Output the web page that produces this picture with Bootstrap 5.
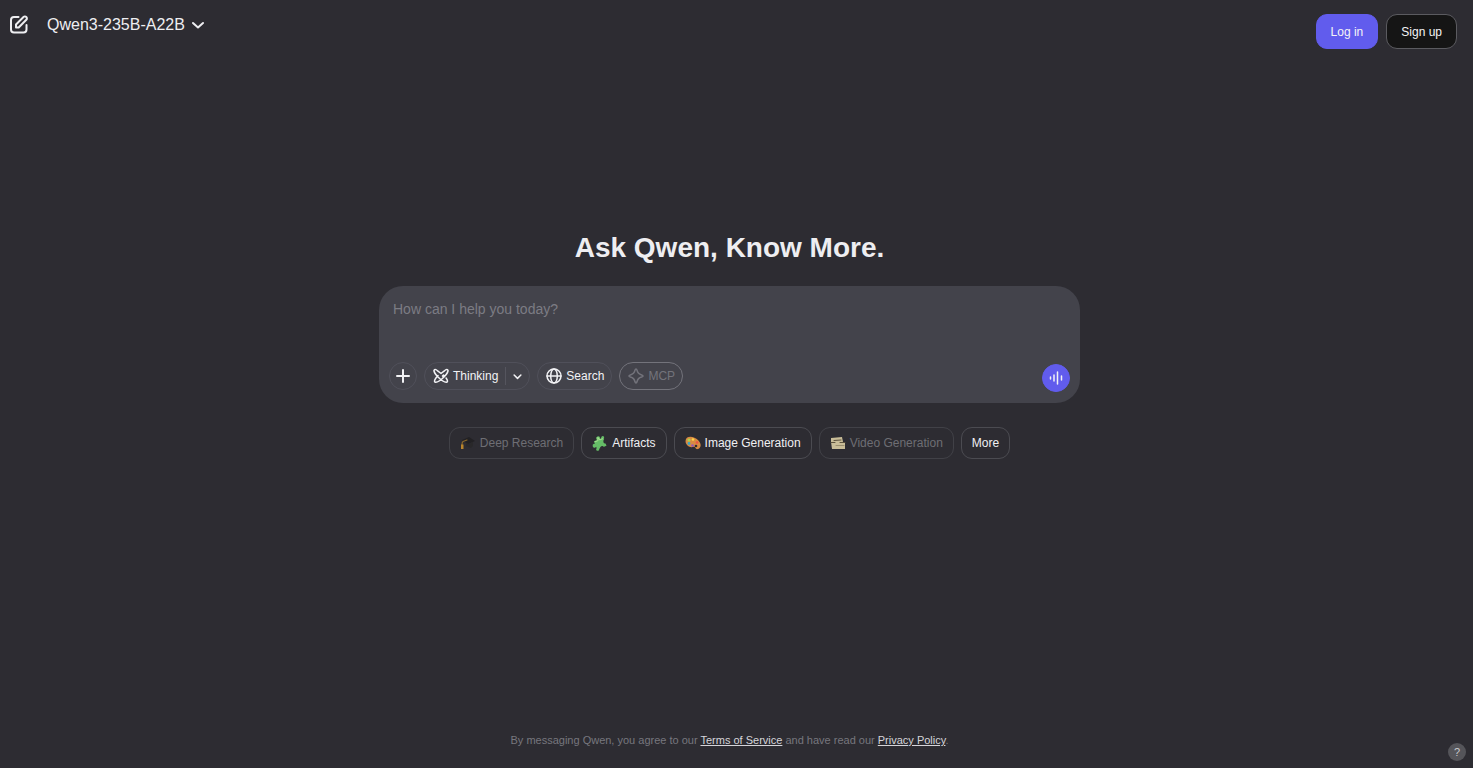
<!DOCTYPE html>
<html lang="en">
<head>
<meta charset="utf-8">
<meta name="viewport" content="width=device-width, initial-scale=1">
<title>Qwen Chat</title>
<link href="https://cdn.jsdelivr.net/npm/bootstrap@5.3.0/dist/css/bootstrap.min.css" rel="stylesheet">
<style>
  body { background: #2d2c32; color: #eeeef1; font-family: "Liberation Sans", Arial, sans-serif; font-size: 12px; line-height: 20px; }
  button { font-family: inherit; }
  svg { display: block; flex: none; fill: none; stroke: currentColor; stroke-width: 2; stroke-linecap: round; stroke-linejoin: round; }
  .thin { stroke-width: 1.5; }
  .emoji { stroke: none; }
  .top-bar { padding: 14px 16px 0 9px; }
  .plain-btn { background: none; border: 0; padding: 0; color: #eeeef1; }
  .model-btn { font-size: 16px; line-height: 22px; gap: 7px; margin-left: 18px; }
  .auth-btn { height: 35px; padding: 0 14px; border-radius: 11px; font-size: 12px; line-height: 20px; --bs-btn-color: #f4f4f6; }
  .login { --bs-btn-bg: #615ced; --bs-btn-border-color: #615ced; }
  .signup { --bs-btn-bg: #151515; --bs-btn-border-color: #5b5b60; }
  .stage { padding: 0 14px 90px 0; }
  .headline { font-size: 28px; line-height: 36px; font-weight: 700; margin-bottom: 20px; }
  .composer { width: 100%; max-width: 701px; background: #43434b; border-radius: 24px; padding: 12px 10px 11px; margin-bottom: 24px; }
  .prompt { background: none; border: 0; outline: 0; resize: none; color: #eeeef1; font-size: 14px; line-height: 22px; height: 64px; padding: 0 4px; overflow: hidden; }
  .prompt::placeholder { color: #7c7c84; opacity: 1; }
  .row-gap { gap: 7px; }
  .tools { padding-bottom: 2px; }
  .tool { height: 28px; border: 1px solid #50505a; border-radius: 14px; }
  .tool-btn { height: 28px; background: none; border: 1px solid #50505a; border-radius: 14px; color: #f2f2f5; padding: 0 7px 0 8px; gap: 4px; }
  .tool .tool-btn { height: 26px; border: 0; }
  .tool .drop { border-left: 1px solid #55555e; border-radius: 0; height: 18px; padding: 0 7px; }
  .round-btn { width: 28px; padding: 0; }
  .tool-btn:disabled { color: #73737b; border-color: #73737b; }
  .voice { background: #615ced; border-color: #615ced; }
  .chip { height: 32px; background: none; border: 1px solid #4b4b51; border-radius: 11px; color: #f0f0f3; padding: 0 10px; gap: 4px; }
  .chip:disabled { color: #6e6e74; border-color: #414147; }
  .terms { padding: 0 14px 18px 0; color: #77777e; font-size: 11px; line-height: 20px; }
  .terms a { color: #d5d5da; }
  .help { position: fixed; right: 7px; bottom: 7px; width: 18px; height: 18px; border-radius: 50%; background: #55555a; color: #c8c8cc; border: 0; padding: 0; font-size: 11px; line-height: 18px; }
</style>
</head>
<body class="d-flex flex-column min-vh-100">
<header class="top-bar d-flex justify-content-between align-items-start">
  <div class="d-flex align-items-center">
    <button class="plain-btn" aria-label="New chat">
      <svg width="20" height="20" viewBox="0 0 20 20"><path d="M9.5 2H5A3 3 0 0 0 2 5v9.500a3 3 0 0 0 3 3h9.500a3 3 0 0 0 3-3V10M7 12.500v-3L14.500 2a1.900 1.900 0 0 1 2.800 2.800L9.700 12.500H7z"/></svg>
    </button>
    <button class="plain-btn model-btn d-flex align-items-center">Qwen3-235B-A22B
      <svg width="12" height="12" viewBox="0 0 12 12"><path d="M1 4 6 8.500 11 4"/></svg>
    </button>
  </div>
  <div class="d-flex gap-2">
    <button class="btn auth-btn login">Log in</button>
    <button class="btn auth-btn signup">Sign up</button>
  </div>
</header>

<main class="stage flex-grow-1 d-flex flex-column align-items-center justify-content-center">
  <h1 class="headline">Ask Qwen, Know More.</h1>
  <form class="composer">
    <textarea class="prompt d-block w-100" aria-label="Message" placeholder="How can I help you today?"></textarea>
    <div class="d-flex justify-content-between align-items-end">
      <div class="tools d-flex row-gap">
        <button type="button" class="tool-btn round-btn d-flex align-items-center justify-content-center" aria-label="Add">
          <svg width="14" height="14" viewBox="0 0 14 14"><path d="M7 1v12M1 7h12"/></svg>
        </button>
        <div class="tool d-flex align-items-center">
          <button type="button" class="tool-btn d-flex align-items-center">
            <svg class="thin" width="16" height="16" viewBox="0 0 16 16"><path d="M5 3.200C3.500 1.600 2 1 1.400 1.700.4 2.700 2 6 5 9s6.500 5.400 8.500 5.200c1.300-.1 1.500-1.600-.4-4.200M11 3.200c1.500-1.600 3-2.200 3.600-1.500 1 1-.6 4.300-3.600 7.300S4.500 14.400 2.500 14.200C1.200 14.100 1 12.600 2.900 10M5 3.200 8 5.500l3-2.300M2.900 10 5 7.500M9.500 8l1-1 1 1-1 1z"/></svg>Thinking
          </button>
          <button type="button" class="tool-btn drop d-flex align-items-center" aria-label="Thinking options">
            <svg width="9" height="9" viewBox="0 0 12 12"><path d="M1.500 4 6 8.500 10.500 4"/></svg>
          </button>
        </div>
        <button type="button" class="tool-btn d-flex align-items-center">
          <svg class="thin" width="16" height="16" viewBox="0 0 16 16"><circle cx="8" cy="8" r="7"/><ellipse cx="8" cy="8" rx="3.300" ry="7"/><path d="M1 8h14"/></svg>Search
        </button>
        <button type="button" class="tool-btn d-flex align-items-center" disabled>
          <svg class="thin" width="16" height="16" viewBox="0 0 16 16"><path d="M8 1c.6 0 .8.5 1 1.200.6 2.700 1.500 3.900 4.600 4.700 1.900.5 1.900 1.700 0 2.200C10.500 9.900 9.600 11.100 9 13.800c-.4 1.600-1.600 1.600-2 0C6.400 11.100 5.500 9.900 2.400 9.100c-1.900-.5-1.900-1.700 0-2.200C5.500 6.100 6.400 4.900 7 2.200 7.200 1.500 7.400 1 8 1z"/></svg>MCP
        </button>
      </div>
      <button type="button" class="tool-btn round-btn voice d-flex align-items-center justify-content-center" aria-label="Voice">
        <svg class="thin" width="14" height="14" viewBox="0 0 14 14"><path d="M1.500 6v2M5 4v6M8.500 1v12M12.500 5v4"/></svg>
      </button>
    </div>
  </form>
  <div class="d-flex flex-wrap justify-content-center row-gap">
    <button class="chip d-flex align-items-center" disabled>
      <svg class="emoji" width="16" height="16" viewBox="0 0 16 16"><path d="M2 5 9 2l6 4-7 3z" fill="#222124"/><path d="M6 8v3l5 2 2-2V7L8 9z" fill="#29282a"/><path d="M7 5 3 6.500Q2 7 2 10" stroke="#8b6a2c" stroke-width="1.200"/><path d="M1 9.500h2.500V14H1z" fill="#b9852d"/></svg>Deep Research
    </button>
    <button class="chip d-flex align-items-center">
      <svg class="emoji" width="16" height="16" viewBox="0 0 16 16"><g transform="rotate(-22 8 8)" fill="#65bd67"><path d="M3 4h10v9H3z"/><circle cx="8" cy="3" r="2"/><circle cx="2" cy="8.500" r="2"/><circle cx="12.500" cy="4" r="1.500"/><circle cx="3.500" cy="13" r="1.500"/><circle cx="13.500" cy="8.500" r="2" fill="#2d2c32"/><circle cx="8" cy="13.500" r="2" fill="#2d2c32"/><path d="M4 5h3l1-3 1 3h3" stroke="#a4dc8e" stroke-width="1" fill="none"/></g></svg>Artifacts
    </button>
    <button class="chip d-flex align-items-center">
      <svg class="emoji" width="16" height="16" viewBox="0 0 16 16"><path d="M1 4C3 0 10 2 13 5c4 4 3 8 0 9-3 1-2-3-5-2C4 13-1 9 1 4z" fill="#d88b42"/><circle cx="11" cy="11" r="1.300" fill="#2d2c32"/><circle cx="4" cy="5" r="1.500" fill="#a7d552"/><circle cx="8" cy="4.500" r="1.300" fill="#ffd449"/><circle cx="4" cy="8.500" r="1.400" fill="#36a5c8"/><circle cx="7.500" cy="10.500" r="1.300" fill="#9356bb"/><circle cx="12" cy="7.500" r="1.300" fill="#ef5146"/></svg>Image Generation
    </button>
    <button class="chip d-flex align-items-center" disabled>
      <svg class="emoji" width="16" height="16" viewBox="0 0 16 16"><path d="M1 3 12 2l1 5H1z" fill="#c9bd98"/><path d="M1 7h14v7H2z" fill="#c9bd98"/><path d="M4 5.500 11 5M1 7.500h4m5 0h5" stroke="#5c523d" stroke-width="1"/><path d="M6 10.500h8" stroke="#9b8f6f" stroke-width="1"/></svg>Video Generation
    </button>
    <button class="chip">More</button>
  </div>
</main>
<footer class="terms text-center">By messaging Qwen, you agree to our <a href="#">Terms of Service</a> and have read our <a href="#">Privacy Policy</a>.</footer>
<button class="help" aria-label="Help">?</button>
<script src="https://cdn.jsdelivr.net/npm/bootstrap@5.3.0/dist/js/bootstrap.bundle.min.js"></script>
</body>
</html>
